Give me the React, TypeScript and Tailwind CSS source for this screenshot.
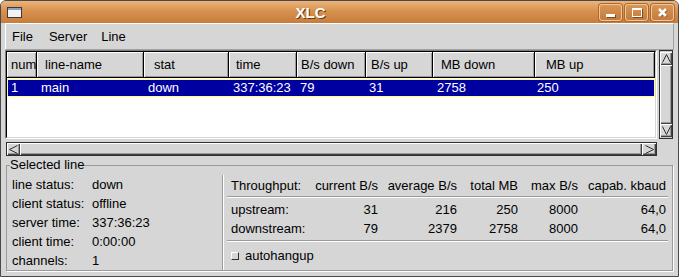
import React from "react";

const columns = [
  { title: "num", value: "1", cls: "w-[30px]", hp: "pl-[4px]", vp: "pl-[4px]" },
  { title: "line-name", value: "main", cls: "w-[107px]", hp: "pl-[8px]", vp: "pl-[4px]" },
  { title: "stat", value: "down", cls: "w-[85px]", hp: "pl-[10px]", vp: "pl-[4px]" },
  { title: "time", value: "337:36:23", cls: "w-[68px]", hp: "pl-[7px]", vp: "pl-[4px]" },
  { title: "B/s down", value: "79", cls: "w-[69px]", hp: "pl-[4px]", vp: "pl-[3px]" },
  { title: "B/s up", value: "31", cls: "w-[67px]", hp: "pl-[5px]", vp: "pl-[3px]" },
  { title: "MB down", value: "2758", cls: "w-[102px]", hp: "pl-[8px]", vp: "pl-[4px]" },
  { title: "MB up", value: "250", cls: "w-[120px]", hp: "pl-[11px]", vp: "pl-[2px]" },
];

const details = [
  ["line status:", "down"],
  ["client status:", "offline"],
  ["server time:", "337:36:23"],
  ["client time:", "0:00:00"],
  ["channels:", "1"],
];

const throughput = [
  ["upstream:", "31", "216", "250", "8000", "64,0"],
  ["downstream:", "79", "2379", "2758", "8000", "64,0"],
];

const bevel = "bg-[#d6d6d6] shadow-[inset_1px_1px_0_#ffffff,inset_-1px_-1px_0_#404040,inset_-2px_-2px_0_#9a9a9a]";

function TitleButton({ children }: { children: React.ReactNode }) {
  return (
    <div className="w-[23px] h-[17px] rounded-[3px] border border-[#f0c79c] shadow-[0_0_0_1px_#a9682f] flex items-center justify-center bg-[linear-gradient(to_bottom,#d99555,#c57b3b)]">
      {children}
    </div>
  );
}

function Arrow({ dir }: { dir: "up" | "down" | "left" | "right" }) {
  const pts = {
    up: "1.5,9.5 5.5,1.5 9.5,9.5",
    down: "1.5,1.5 5.5,9.5 9.5,1.5",
    left: "9.5,1.5 1.5,5.5 9.5,9.5",
    right: "1.5,1.5 9.5,5.5 1.5,9.5",
  }[dir];
  return (
    <svg width="11" height="11" viewBox="0 0 11 11">
      <polyline points={pts} fill="none" stroke="#303030" strokeWidth="1" />
    </svg>
  );
}

export default function App() {
  return (
    <div className="w-[679px] h-[277px] flex flex-col bg-[#d6d6d6] border border-[#4a4a4a] rounded-t-[6px] overflow-hidden font-['Liberation_Sans',Arial,sans-serif] text-[13px] text-black">
      {/* title bar */}
      <div className="h-[22px] shrink-0 flex items-center pl-[6px] pr-[4px] bg-[linear-gradient(to_bottom,#ecb47c,#d8914e_45%,#c77d3d)]">
        <svg width="15" height="11" viewBox="0 0 15 11">
          <rect x="0.5" y="0.5" width="14" height="10" fill="#f2f2f2" stroke="#3a3a3a" />
          <rect x="1" y="1" width="13" height="2" fill="#8f9fc8" />
        </svg>
        <div className="flex-1 text-center text-white font-bold text-[15px] leading-none [text-shadow:1px_1px_0_#6a3c14]">
          XLC
        </div>
        <div className="flex gap-[3px]">
          <TitleButton>
            <div className="w-[9px] h-[3px] bg-white mt-[7px] shadow-[1px_1px_0_#7a4a20]" />
          </TitleButton>
          <TitleButton>
            <div className="w-[10px] h-[9px] border border-white border-t-2 shadow-[1px_1px_0_#7a4a20]" />
          </TitleButton>
          <TitleButton>
            <svg width="11" height="11" viewBox="0 0 11 11">
              <path d="M2 2 L9 9 M9 2 L2 9" stroke="#7a4a20" strokeWidth="2.6" transform="translate(0.6 0.6)" />
              <path d="M2 2 L9 9 M9 2 L2 9" stroke="#ffffff" strokeWidth="2.6" />
            </svg>
          </TitleButton>
        </div>
      </div>

      <div className="flex-1 flex flex-col px-[4px]">
        {/* menu bar */}
        <div className="h-[27px] shrink-0 flex items-center border border-t-white border-l-white border-b-[#a0a0a0] border-r-[#a0a0a0]">
          <span className="ml-[6px]">File</span>
          <span className="ml-[16px]">Server</span>
          <span className="ml-[14px]">Line</span>
        </div>

        {/* list */}
        <div className="flex gap-[2px]">
          <div className="w-[652px] h-[89px] border border-t-[#808080] border-l-[#808080] border-b-white border-r-white">
            <div className="h-full border border-t-black border-l-black border-b-[#d6d6d6] border-r-[#d6d6d6] bg-white overflow-hidden">
              <div className="flex h-[26px]">
                {columns.map((c) => (
                  <div
                    key={c.title}
                    className={`${c.cls} ${c.hp} shrink-0 flex items-center overflow-hidden whitespace-nowrap bg-[#d6d6d6] border-r border-b border-black shadow-[inset_1px_1px_0_#ffffff,inset_-1px_-1px_0_#9a9a9a]`}
                  >
                    {c.title}
                  </div>
                ))}
              </div>
              <div className="mt-[1px] flex h-[18px] bg-[#0000a0] text-white shadow-[inset_0_0_0_1px_#ffff80]">
                {columns.map((c) => (
                  <div key={c.title} className={`${c.cls} ${c.vp} shrink-0 flex items-center whitespace-nowrap`}>
                    {c.value}
                  </div>
                ))}
              </div>
            </div>
          </div>
          {/* vertical scrollbar */}
          <div className="w-[14px] h-[89px] pt-[1px] pb-[1px] flex flex-col border border-[#303030] bg-[#c8c8c8]">
            <div className={`h-[13px] shrink-0 flex items-center justify-center ${bevel}`}>
              <Arrow dir="up" />
            </div>
            <div className={`flex-1 ${bevel}`} />
            <div className={`h-[13px] shrink-0 flex items-center justify-center ${bevel}`}>
              <Arrow dir="down" />
            </div>
          </div>
        </div>

        {/* horizontal scrollbar */}
        <div className="mt-[3px] w-[651px] ml-[1px] h-[14px] flex border border-[#303030] bg-[#c8c8c8]">
          <div className={`w-[13px] shrink-0 flex items-center justify-center ${bevel}`}>
            <Arrow dir="left" />
          </div>
          <div className={`flex-1 ${bevel}`} />
          <div className={`w-[14px] shrink-0 flex items-center justify-center ${bevel}`}>
            <Arrow dir="right" />
          </div>
        </div>

        {/* selected line group */}
        <fieldset className="mt-[1px] ml-[1px] w-[667px] flex-1 border border-[#9a9a9a] shadow-[1px_1px_0_#ffffff] px-0 pb-0 mb-[5px]">
          <legend className="ml-[3px] leading-[16px]">Selected line</legend>
          <div className="flex h-full">
            <div className="w-[215px] shrink-0 pt-[2px] pl-[5px]">
              {details.map(([k, v]) => (
                <div key={k} className="h-[19px] flex items-center">
                  <span className="w-[80px] shrink-0">{k}</span>
                  <span>{v}</span>
                </div>
              ))}
            </div>
            <div className="flex-1 mt-[2px] flex flex-col border-l border-[#9a9a9a] shadow-[inset_1px_0_0_#ffffff]">
              <div className="h-[21px] pl-[8px] grid grid-cols-[69px_78px_79px_61px_60px_88px] items-center whitespace-nowrap">
                <span>Throughput:</span>
                <span className="text-right">current B/s</span>
                <span className="text-right">average B/s</span>
                <span className="text-right">total MB</span>
                <span className="text-right">max B/s</span>
                <span className="text-right">capab. kbaud</span>
              </div>
              <div className="mx-[4px] h-[2px] border-t border-[#9a9a9a] border-b border-b-white" />
              <div className="mt-[2px]">
                {throughput.map((r) => (
                  <div key={r[0]} className="h-[19px] pl-[8px] grid grid-cols-[69px_78px_79px_61px_60px_88px] items-center whitespace-nowrap">
                    {r.map((cell, i) => (
                      <span key={i} className={i === 0 ? "" : "text-right"}>
                        {cell}
                      </span>
                    ))}
                  </div>
                ))}
              </div>
              <div className="mt-[2px] mx-[4px] h-[2px] border-t border-[#9a9a9a] border-b border-b-white" />
              <div className="flex-1 flex items-center pl-[8px] gap-[6px]">
                <div className="w-[8px] h-[8px] bg-[#d6d6d6] border border-t-white border-l-white border-b-[#303030] border-r-[#303030]" />
                <span>autohangup</span>
              </div>
            </div>
          </div>
        </fieldset>
      </div>
    </div>
  );
}
